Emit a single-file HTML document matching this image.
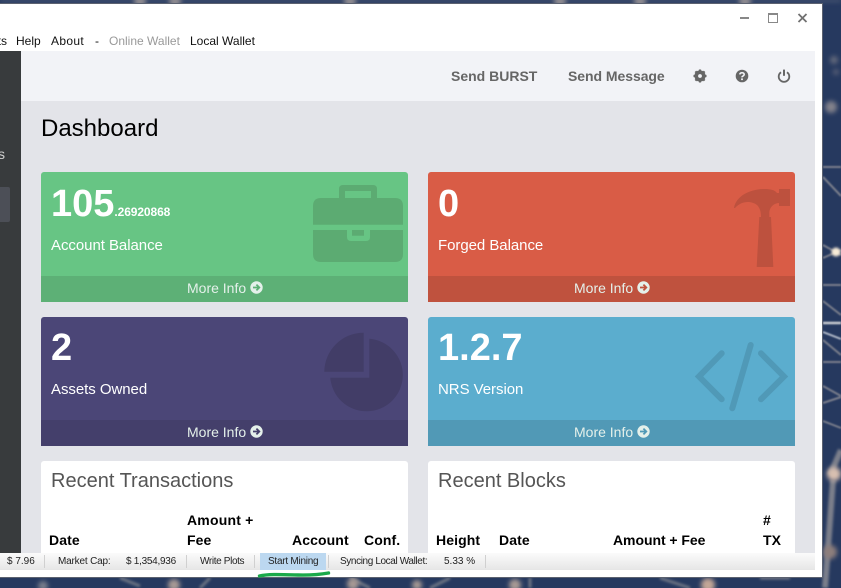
<!DOCTYPE html>
<html><head><meta charset="utf-8">
<style>
html,body{margin:0;padding:0;width:841px;height:588px;overflow:hidden;background:#26395f;font-family:"Liberation Sans",sans-serif}
.a{position:absolute;white-space:nowrap}
.c{position:absolute;border-radius:3px 3px 0 0;overflow:hidden}
.f{position:absolute;left:0;right:0;bottom:0;height:26px;color:#e4f0ea;font-size:14px;line-height:26px}
.f span{position:absolute;left:146px;top:-1px}
.f svg{position:absolute;left:209px;top:5px}
.n{color:#fff;font-weight:bold;font-size:38px;line-height:40px;position:absolute;left:10px;top:12px}
.l{color:#fff;font-size:15px;letter-spacing:-.05px;position:absolute;left:10px;top:65px;line-height:18px}
.h{font-weight:bold;font-size:14px;color:#000;letter-spacing:.1px;line-height:20px}
.t{font-size:20px;color:#555;line-height:24px}
.m{font-size:12px;color:#111;line-height:14px;top:34px}
.s{font-size:10px;color:#222;line-height:14px;top:555px}
.d{position:absolute;top:555px;width:1px;height:13px;background:#d0d0d0}
.nav{font-weight:bold;font-size:14px;color:#666;line-height:16px;top:68px}
</style></head><body>
<svg class="a" style="left:0;top:0" width="841" height="588" viewBox="0 0 841 588">
<defs><filter id="b" x="0" y="0" width="841" height="588" filterUnits="userSpaceOnUse"><feGaussianBlur stdDeviation="1.200"/></filter>
<filter id="bb" x="0" y="0" width="841" height="588" filterUnits="userSpaceOnUse"><feGaussianBlur stdDeviation="2.500"/></filter>
<filter id="bl" x="0" y="0" width="841" height="588" filterUnits="userSpaceOnUse"><feGaussianBlur stdDeviation=".8"/></filter></defs>
<rect width="841" height="588" fill="#26395f"/>
<g filter="url(#bl)" stroke="#8f8f96" stroke-width="2" fill="none">
<path d="M823 285H841M823 301L841 315" stroke-opacity=".8"/>
<path d="M823 323H841" stroke="#c9ccd2" stroke-width="2.500"/>
<path d="M823 332L841 339" stroke="#b4bccb"/>
<path d="M823 340L841 355M823 362H841M823 386L841 396M823 403L841 397M823 421L841 428M823 167H841M823 177L841 196M823 245L841 255M823 258L841 250" stroke-opacity=".8"/>
</g>
<g filter="url(#b)" fill="none">
<path d="M830 475L841 450M833 480L825 588" stroke-width="6" stroke="#7b7f8b"/>
<path d="M120 578L140 586M210 578L200 588M530 578V588M790 578H760M660 578L690 588M350 578L370 588M450 578L430 588" stroke="#6d7483" stroke-width="3"/>
</g>
<g filter="url(#bb)" fill="#8d8a90">
<circle cx="834" cy="60" r="4" opacity=".6"/><circle cx="836" cy="72" r="3" opacity=".5"/><circle cx="831" cy="107" r="6" opacity=".9"/>
<circle cx="834" cy="474" r="7" fill="#d8bfb0"/><circle cx="830" cy="552" r="7" fill="#8d7e7c"/>
<circle cx="174" cy="585" r="6" fill="#a89a94"/><circle cx="353" cy="584" r="6" fill="#a89a94"/><circle cx="417" cy="585" r="5" fill="#a89a94"/><circle cx="515" cy="585" r="6" fill="#a89a94"/><circle cx="708" cy="585" r="7" fill="#c2a696"/><circle cx="43" cy="586" r="5" fill="#7a7f8c"/>
<path d="M0 .5H841" stroke="#58627a" stroke-width="2" fill="none"/>
<circle cx="140" cy="1" r="6"/><circle cx="175" cy="1" r="6"/><circle cx="350" cy="1" r="6"/><circle cx="560" cy="1" r="6"/><circle cx="640" cy="1" r="6"/><circle cx="745" cy="1" r="6"/>
</g>
<circle cx="836" cy="252" r="4.500" fill="#f8ecd8" filter="url(#b)"/>
</svg>

<!-- window -->
<div class="a" style="left:0;top:3px;width:822px;height:573px;background:#fff;border:1px solid #5c6270;border-left:0"></div>
<div class="a" style="left:740px;top:17px;width:9px;height:2px;background:#888"></div>
<div class="a" style="left:768px;top:13px;width:8px;height:7px;border:1px solid #888;border-top-width:2px"></div>
<svg class="a" style="left:797px;top:13px" width="11" height="10"><path d="M1.500 1L9.500 9M9.500 1L1.500 9" stroke="#707070" stroke-width="1.800"/></svg>

<div class="a m" style="left:-1px;width:8px;overflow:hidden;direction:rtl">ts</div>
<div class="a m" style="left:16px">Help</div>
<div class="a m" style="left:51px;letter-spacing:.35px">About</div>
<div class="a m" style="left:95px">-</div>
<div class="a m" style="left:109px;color:#999">Online Wallet</div>
<div class="a m" style="left:190px">Local Wallet</div>

<!-- app -->
<div class="a" style="left:0;top:51px;width:21px;height:502px;background:#383b3d"></div>
<div class="a" style="left:0;top:187px;width:10px;height:35px;background:#4c4f57;border-radius:0 2px 2px 0"></div>
<div class="a" style="left:-5px;top:146px;font-size:14px;color:#d0d0d0;line-height:16px;width:10px;overflow:hidden;text-align:right">s</div>
<div class="a" style="left:21px;top:51px;width:794px;height:50px;background:#f2f3f7"></div>
<div class="a" style="left:21px;top:101px;width:794px;height:452px;background:#e3e4e9"></div>

<div class="a nav" style="left:451px">Send BURST</div>
<div class="a nav" style="left:568px;letter-spacing:-.05px">Send Message</div>
<svg class="a" style="left:693px;top:69px" width="14" height="14" viewBox="0 0 14 14"><circle cx="7" cy="7" r="4" fill="none" stroke="#666" stroke-width="3.200"/><path d="M7 .5V13.500M.5 7H13.500M2.400 2.400L11.600 11.600M11.600 2.400L2.400 11.600" stroke="#666" stroke-width="2.200"/><circle cx="7" cy="7" r="1.900" fill="#f2f3f7"/></svg>
<svg class="a" style="left:735px;top:69px" width="14" height="14" viewBox="0 0 14 14"><circle cx="7" cy="7" r="6.300" fill="#666"/><path d="M4.800 5.400C5 3.200 9.200 3.200 9.200 5.500C9.200 7 7 6.800 7 8.400" fill="none" stroke="#f2f3f7" stroke-width="1.600"/><rect x="6.100" y="9.400" width="1.800" height="1.700" fill="#f2f3f7"/></svg>
<svg class="a" style="left:777px;top:69px" width="14" height="14" viewBox="0 0 14 14"><path d="M4 3.200A5.300 5.300 0 1 0 10 3.200" fill="none" stroke="#666" stroke-width="1.800"/><path d="M7 .6V6.800" stroke="#666" stroke-width="2"/></svg>

<div class="a" style="left:41px;top:115px;font-size:24px;line-height:28px;color:#000">Dashboard</div>

<!-- cards -->
<div class="c" style="left:41px;top:172px;width:367px;height:130px;background:#67c584">
<div class="n">105<span style="font-size:12px;line-height:12px;letter-spacing:-.1px">.26920868</span></div><div class="l">Account Balance</div>
<div class="f" style="background:#5db076"><span>More Info</span><svg width="13" height="13" viewBox="0 0 13 13"><circle cx="6.500" cy="6.500" r="6.200" fill="#e4f0ea"/><path d="M3 6.500H9M6.400 3.600L9.300 6.500L6.400 9.400" fill="none" stroke="#5db076" stroke-width="1.800"/></svg></div></div>
<div class="c" style="left:428px;top:172px;width:367px;height:130px;background:#d95c46">
<div class="n">0</div><div class="l">Forged Balance</div>
<div class="f" style="background:#bf523e"><span>More Info</span><svg width="13" height="13" viewBox="0 0 13 13"><circle cx="6.500" cy="6.500" r="6.200" fill="#e4f0ea"/><path d="M3 6.500H9M6.400 3.600L9.300 6.500L6.400 9.400" fill="none" stroke="#bf523e" stroke-width="1.800"/></svg></div></div>
<div class="c" style="left:41px;top:317px;width:367px;height:129px;background:#4b4677">
<div class="n" style="top:11px">2</div><div class="l" style="top:64px">Assets Owned</div>
<div class="f" style="background:#443f6b"><span>More Info</span><svg width="13" height="13" viewBox="0 0 13 13"><circle cx="6.500" cy="6.500" r="6.200" fill="#e4f0ea"/><path d="M3 6.500H9M6.400 3.600L9.300 6.500L6.400 9.400" fill="none" stroke="#443f6b" stroke-width="1.800"/></svg></div></div>
<div class="c" style="left:428px;top:317px;width:367px;height:129px;background:#5badce">
<div class="n" style="top:11px">1.2.7</div><div class="l" style="top:64px">NRS Version</div>
<div class="f" style="background:#5199b6"><span>More Info</span><svg width="13" height="13" viewBox="0 0 13 13"><circle cx="6.500" cy="6.500" r="6.200" fill="#e4f0ea"/><path d="M3 6.500H9M6.400 3.600L9.300 6.500L6.400 9.400" fill="none" stroke="#5199b6" stroke-width="1.800"/></svg></div></div>

<svg class="a" style="left:0;top:0" width="841" height="588" viewBox="0 0 841 588">
<!-- briefcase -->
<g fill="#5cab72">
<path d="M339 198V189Q339 185 343 185H373Q377 185 377 189V198H371V191H345V198Z"/>
<path d="M321 198H395Q403 198 403 206V224.700H313V206Q313 198 321 198Z"/>
<path d="M313 230H347V237Q347 241 351 241H366Q370 241 370 237V230H403V254Q403 262 395 262H321Q313 262 313 254Z"/>
<rect x="352" y="230" width="12" height="5.700"/>
</g>
<!-- hammer -->
<path fill="#bd513e" d="M734 208C736 196 750 189 765 189C770 189 775 190 777 193H779V189H790V206H779V203C775 203 770 206 769.300 212V217H771L773.300 267H756.700L759.300 217H761C761 212 760 208 757 205C752 201 742 200 735 208Z"/>
<!-- pie -->
<g fill="#423d67">
<path d="M363.700 371.700H324.300A39.400 39.400 0 0 1 363.700 332.700Z"/>
<path d="M369.300 338.800A36.300 36.300 0 1 1 330.300 377.700H369.300Z"/>
</g>
<!-- code -->
<g fill="none" stroke="#5099b7" stroke-width="6" stroke-linecap="round" stroke-linejoin="miter">
<path d="M721.700 353.300L699 376.500L721.700 399.300"/>
<path d="M750.700 345L732.300 408.300"/>
<path d="M761 353.300L784 376.500L761 399.300"/>
</g>
</svg>

<!-- boxes -->
<div class="a" style="left:41px;top:461px;width:367px;height:92px;background:#fff;border-radius:3px 3px 0 0"></div>
<div class="a" style="left:428px;top:461px;width:367px;height:92px;background:#fff;border-radius:3px 3px 0 0"></div>
<div class="a t" style="left:51px;top:469px">Recent Transactions</div>
<div class="a t" style="left:438px;top:469px">Recent Blocks</div>
<div class="a h" style="left:49px;top:530px">Date</div>
<div class="a h" style="left:187px;top:510px;letter-spacing:.2px">Amount +</div>
<div class="a h" style="left:187px;top:530px">Fee</div>
<div class="a h" style="left:292px;top:530px">Account</div>
<div class="a h" style="left:364px;top:530px">Conf.</div>
<div class="a h" style="left:436px;top:530px">Height</div>
<div class="a h" style="left:499px;top:530px">Date</div>
<div class="a h" style="left:613px;top:530px;letter-spacing:-.05px">Amount + Fee</div>
<div class="a h" style="left:763px;top:510px">#</div>
<div class="a h" style="left:763px;top:530px">TX</div>

<!-- status bar -->
<div class="a" style="left:0;top:553px;width:815px;height:17px;background:linear-gradient(#fbfbfb,#e6e6e6)"></div>
<div class="a" style="left:260px;top:553px;width:66px;height:17px;background:#bcd8f0"></div>
<div class="a s" style="left:7px">$ 7.96</div>
<div class="a s" style="left:58px;letter-spacing:-.18px">Market Cap:</div>
<div class="a s" style="left:126px;letter-spacing:-.27px">$ 1,354,936</div>
<div class="a s" style="left:200px;letter-spacing:-.36px">Write Plots</div>
<div class="a s" style="left:268px;letter-spacing:-.25px">Start Mining</div>
<div class="a s" style="left:340px;letter-spacing:-.38px">Syncing Local Wallet:</div>
<div class="a s" style="left:444px">5.33 %</div>
<div class="d" style="left:44px"></div><div class="d" style="left:186px"></div><div class="d" style="left:254px"></div><div class="d" style="left:328px"></div><div class="d" style="left:485px"></div>
<svg class="a" style="left:250px;top:568px" width="90" height="12"><path d="M9.500 8C18 6 30 6.500 48 7C60 7.300 70 6.500 78.500 5" fill="none" stroke="#1aa94a" stroke-width="3.400" stroke-linecap="round"/></svg>
</body></html>
